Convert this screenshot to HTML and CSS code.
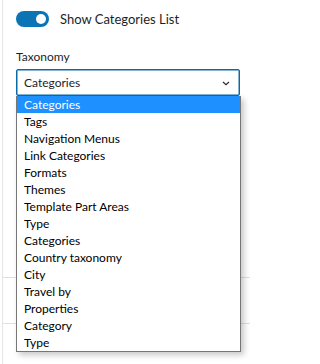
FILE: index.html
```
<!DOCTYPE html>
<html>
<head>
<meta charset="utf-8">
<link rel="stylesheet" href="styles.css">
</head>
<body>
<div class="panel">
  <div class="toggle-row">
    <span class="toggle"><span class="knob"></span></span>
    <span class="toggle-label">Show Categories List</span>
  </div>
  <div class="field">
    <div class="field-label">Taxonomy</div>
    <div class="select-wrap">
      <div class="select">
        <span class="select-value">Categories</span>
        <svg class="chevron" width="8" height="5" viewBox="0 0 8 5"><path d="M1 1 L4 3.6 L7 1" fill="none" stroke="#2b2b2b" stroke-width="1.2"/></svg>
      </div>
      <ul class="dropdown">
        <li class="opt selected">Categories</li>
        <li class="opt">Tags</li>
        <li class="opt">Navigation Menus</li>
        <li class="opt">Link Categories</li>
        <li class="opt">Formats</li>
        <li class="opt">Themes</li>
        <li class="opt">Template Part Areas</li>
        <li class="opt">Type</li>
        <li class="opt">Categories</li>
        <li class="opt">Country taxonomy</li>
        <li class="opt">City</li>
        <li class="opt">Travel by</li>
        <li class="opt">Properties</li>
        <li class="opt">Category</li>
        <li class="opt">Type</li>
      </ul>
    </div>
  </div>
  <div class="bg-row">
    <div class="bg-button"></div>
  </div>
  <div class="sep sep-1"></div>
  <div class="sep sep-2"></div>
</div>
</body>
</html>
```
FILE: styles.css
```
html, body {
  margin: 0;
  padding: 0;
  background: #ffffff;
}
body {
  font-family: "Segoe UI", Lato, "Noto Sans", sans-serif;
  color: #1e1e1e;
  width: 250px;
  height: 364px;
  overflow: hidden;
}
.panel {
  margin-left: 2px;
  border-left: 1px solid #e6e6e6;
  height: 364px;
  box-sizing: border-box;
}
.toggle-row {
  display: flex;
  align-items: center;
  padding: 11px 0 0 13px;
  height: 16px;
}
.toggle {
  width: 33px;
  height: 16px;
  border-radius: 8px;
  background: #0a74b5;
  display: flex;
  align-items: center;
  justify-content: flex-end;
  padding-right: 3px;
  box-sizing: border-box;
}
.knob {
  width: 10px;
  height: 10px;
  border-radius: 50%;
  background: #ffffff;
}
.toggle-label {
  margin-left: 11px;
  font-size: 13px;
  line-height: 16px;
  color: #1e1e1e;
}
.field {
  padding: 0 10px 0 13px;
  margin-top: 22px;
}
.field-label {
  font-size: 12px;
  line-height: 16px;
  height: 20px;
}
.select-wrap {
  position: relative;
}
.select {
  height: 27px;
  border: 1px solid #0b6aa5;
  box-shadow: inset 0 0 0 0.5px #0b6aa5;
  border-radius: 2px;
  box-sizing: border-box;
  display: flex;
  align-items: center;
  justify-content: space-between;
  padding: 0 9px 0 7px;
  font-size: 12px;
}
.select-value {
  line-height: 16px;
  padding-top: 1px;
}
.chevron {
  display: block;
  margin-top: 2px;
}
.dropdown {
  position: absolute;
  left: 0;
  top: 27px;
  width: 225px;
  margin: 0;
  padding: 0;
  list-style: none;
  background: #ffffff;
  border: 1px solid #767676;
  border-top: none;
  box-sizing: border-box;
  box-shadow: 3px 3px 6px rgba(0, 0, 0, 0.22);
  z-index: 2;
}
.opt {
  height: 17px;
  line-height: 17px;
  font-size: 12px;
  padding-left: 7px;
  color: #000000;
  white-space: nowrap;
}
.opt.selected {
  background: #1e90ff;
  color: #ffffff;
}
.bg-row {
  display: flex;
  justify-content: flex-end;
  padding-right: 9px;
  margin-top: 46px;
}
.bg-button {
  width: 40px;
  height: 25px;
  border: 1px solid #757575;
  border-radius: 2px;
  box-sizing: border-box;
}
.sep {
  height: 1px;
  background: #e0e0e0;
}
.sep-1 {
  margin-top: 110px;
}
.sep-2 {
  margin-top: 45px;
}
```
